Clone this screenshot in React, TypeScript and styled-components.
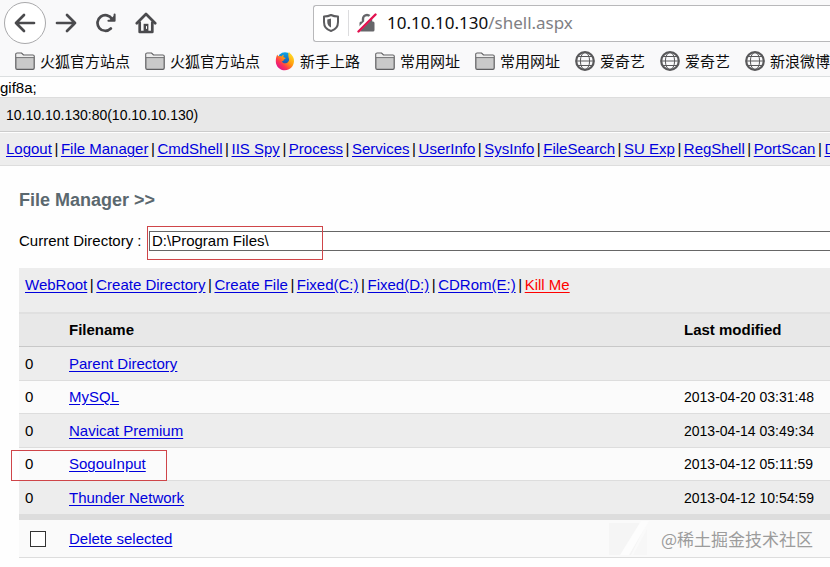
import React, { Fragment, useState } from "react";
import styled, { createGlobalStyle, css } from "styled-components";

const GlobalStyle = createGlobalStyle`
  *, *::before, *::after { box-sizing: border-box; }
  body {
    margin: 0;
    background: #fefefe;
    color: #000;
    font: 15px/20px "Liberation Sans", Arial, "Noto Sans CJK SC", sans-serif;
    overflow-x: hidden;
  }
`;

const Page = styled.div`
  overflow: hidden;
`;

/* ---------- browser chrome ---------- */

const Chrome = styled.header`
  background: #f9f9fa;
  border-bottom: 1px solid #dcdfe0;
`;

const NavBar = styled.div`
  display: flex;
  align-items: center;
  height: 46px;
  padding-left: 4px;
`;

const IconButton = styled.button`
  display: flex;
  align-items: center;
  justify-content: center;
  flex: none;
  width: 40px;
  height: 40px;
  padding: 0;
  border: 0;
  background: none;
  color: #4a4a4d;
`;

const BackButton = styled(IconButton)`
  width: 42px;
  height: 42px;
  border: 1px solid #a9a9ab;
  border-radius: 50%;
  background: #fff;
`;

const UrlBar = styled.div`
  display: flex;
  align-items: center;
  flex: 1;
  height: 37px;
  margin-left: 147px;
  padding-left: 8px;
  border: 1px solid #b8b8ba;
  border-right: 0;
  border-radius: 3px 0 0 3px;
  background: #fff;
`;

const UrlDivider = styled.span`
  width: 1px;
  height: 26px;
  margin: 0 8px;
  background: #dcdcde;
`;

const UrlText = styled.div`
  margin-left: 10px;
  color: #808084;
  font: 17px/24px "Noto Sans", "Open Sans", sans-serif;
  white-space: nowrap;
`;

const UrlHost = styled.span`
  color: #0c0c0d;
`;

const Bookmarks = styled.nav`
  display: flex;
  align-items: center;
  gap: 15px;
  height: 30px;
  padding-left: 15px;
  overflow: hidden;
`;

const Bookmark = styled.a`
  display: flex;
  align-items: center;
  flex: none;
  gap: 5px;
  color: #0c0c0d;
  font: 15px/22px "Noto Sans CJK SC", sans-serif;
  text-decoration: none;
  white-space: nowrap;
`;

/* ---------- page content ---------- */

const Stray = styled.div`
  height: 20px;
  line-height: 22px;
`;

const HostBar = styled.div`
  height: 35px;
  padding: 7px 6px;
  border-top: 1px solid #ddd;
  border-bottom: 1px solid #ccc;
  background: #e8e8e8;
  font-size: 14px;
`;

const LinkRow = styled.nav`
  display: flex;
  white-space: nowrap;
  overflow: hidden;
`;

const Separator = styled.span`
  flex: none;
  width: 9px;
  text-align: center;
`;

const MenuBar = styled(LinkRow)`
  height: 33px;
  margin-top: 1px;
  padding: 6px;
  border-bottom: 1px solid #ddd;
  background: #ededed;
`;

const Link = styled.a<{ $danger?: boolean }>`
  color: ${(p) => (p.$danger ? "#f00" : "#00d")};
  text-decoration: underline;
  text-underline-offset: 2px;
`;

const Main = styled.main`
  padding: 24px 0 0 19px;
`;

const Title = styled.h2`
  margin: 0;
  color: #5b686f;
  font-size: 18px;
  line-height: 20px;
`;

const DirectoryForm = styled.form`
  display: flex;
  align-items: center;
  margin-top: 21px;
`;

const DirectoryLabel = styled.label`
  flex: none;
  width: 130px;
`;

const InputWrap = styled.div`
  position: relative;
  flex: 1;
`;

const DirectoryInput = styled.input`
  display: block;
  width: 100%;
  height: 20px;
  padding: 0 2px;
  border: 1px solid #666;
  border-right: 0;
  border-radius: 0;
  background: #fff;
  color: #000;
  font: inherit;
`;

const Mark = styled.span`
  position: absolute;
  border: 1px solid #cf4549;
  pointer-events: none;
`;

const InputMark = styled(Mark)`
  left: -2px;
  top: -5px;
  width: 176px;
  height: 34px;
`;

const RowMark = styled(Mark)`
  left: -8px;
  top: 2px;
  width: 156px;
  height: 31px;
`;

const Tools = styled(LinkRow)`
  height: 44px;
  margin-top: 17px;
  padding: 7px 6px;
  background: #ededed;
`;

const Table = styled.table`
  width: 100%;
  border-collapse: separate;
  border-spacing: 0;
  table-layout: fixed;
  text-align: left;
`;

const Col = styled.col<{ $width?: number }>`
  ${(p) => p.$width && css`width: ${p.$width}px;`}
`;

const HeadRow = styled.tr`
  height: 35px;
  background: #e8e8e8;
  & > th {
    padding: 0 0 0 6px;
    border-top: 2px solid #e0e0e0;
    border-bottom: 1px solid #c8c8c8;
  }
`;

const Row = styled.tr<{ $shade: boolean }>`
  height: ${(p) => (p.$shade ? 34 : 33)}px;
  background: ${(p) => (p.$shade ? "#ededed" : "#fbfbfb")};
  & > td {
    padding: 0 0 0 6px;
    border-bottom: 1px solid #ddd;
    white-space: nowrap;
  }
  &:last-child {
    height: 33px;
  }
  &:last-child > td {
    border-bottom: 0;
  }
`;

const MarkedCell = styled.td`
  position: relative;
`;

const DateCell = styled.td`
  font-size: 14px;
`;

const FootRow = styled.tr`
  height: 44px;
  background: #fafafa;
  & > td {
    padding: 0 0 0 6px;
    border-top: 6px solid #ddd;
    border-bottom: 1px solid #ddd;
  }
`;

const CheckBox = styled.input`
  appearance: none;
  display: block;
  width: 16px;
  height: 16px;
  margin: 0 0 0 5px;
  border: 1px solid #333;
  background: #fff;
  &:checked {
    background: #333;
    box-shadow: inset 0 0 0 3px #fff;
  }
`;

const WatermarkCell = styled.td`
  position: relative;
`;

const Watermark = styled.div`
  position: absolute;
  right: 17px;
  top: 0;
  display: flex;
  align-items: center;
  gap: 8px;
  height: 38px;
  color: #9c9c9c;
  font: 17px/24px "Noto Sans CJK SC", sans-serif;
  white-space: nowrap;
  pointer-events: none;
`;

/* ---------- icons ---------- */

const stroke = {
  fill: "none",
  stroke: "currentColor",
  strokeWidth: 2.7,
  strokeLinecap: "round" as const,
  strokeLinejoin: "round" as const,
};

const BackIcon = () => (
  <svg width="22" height="20" viewBox="0 0 22 20" {...stroke}>
    <path d="M20 10H2M10 2L2 10l8 8" />
  </svg>
);

const ForwardIcon = () => (
  <svg width="22" height="20" viewBox="0 0 22 20" {...stroke}>
    <path d="M2 10h18M12 2l8 8-8 8" />
  </svg>
);

const ReloadIcon = () => (
  <svg width="20" height="20" viewBox="0 0 20 20" {...stroke}>
    <path d="M14.800 15.500A7.800 7.800 0 1 1 16 6" />
    <path d="M18.600 1.500v6.200h-6.200" strokeWidth="2" />
    <path d="M18.600 2v5.700h-5.700z" fill="currentColor" stroke="none" />
  </svg>
);

const HomeIcon = () => (
  <svg width="22" height="22" viewBox="0 0 22 22" {...stroke}>
    <path d="M1.800 11.300L11 2l9.200 9.300" />
    <path d="M4.700 10.500V20h12.600v-9.500" />
    <path d="M8.600 20v-8.200h4.800V20z" fill="currentColor" stroke="none" />
    <path d="M11.500 14.500v2" stroke="#fff" strokeWidth="1" />
  </svg>
);

const ShieldIcon = () => (
  <svg width="18" height="20" viewBox="0 0 18 20">
    <path
      d="M9 2C11.200 3.200 13.500 3.600 16 3.600V9c0 4.500-2.500 7.700-7 9-4.500-1.300-7-4.500-7-9V3.600C4.500 3.600 6.800 3.200 9 2z"
      fill="none"
      stroke="#5c5c5f"
      strokeWidth="2"
      strokeLinejoin="round"
    />
    <path d="M9 5.500v9C6.500 13.300 5.300 11.500 5.300 9V6.400C6.800 6.300 8 6 9 5.500z" fill="#5c5c5f" />
  </svg>
);

const LockIcon = () => (
  <svg width="20" height="20" viewBox="0 0 20 20">
    <path d="M6 9V6a4 4 0 0 1 8 0v3" fill="none" stroke="#66666a" strokeWidth="2.400" />
    <rect x="2.500" y="8.500" width="15" height="10" rx="1.500" fill="#66666a" />
    <path d="M0.500 17.800L17.800 0.500" stroke="#fff" strokeWidth="4" />
    <path d="M1.500 18.500L18.500 1.500" stroke="#e2114f" strokeWidth="2.400" strokeLinecap="round" />
  </svg>
);

const FolderIcon = () => (
  <svg width="20" height="20" viewBox="0 0 20 20">
    <path
      d="M0.800 17V3.300A1.300 1.300 0 0 1 2.100 2H6.500l2 2h9.400a1.300 1.300 0 0 1 1.300 1.300V17a1.300 1.300 0 0 1-1.300 1.300H2.100A1.300 1.300 0 0 1 0.800 17z"
      fill="#c9c9c9"
      stroke="#5e5e60"
      strokeWidth="1.200"
    />
    <path d="M1.400 2.700h4.800l2 2h10.300v1.500H1.400z" fill="#ededed" />
    <path d="M1 6.600h18" stroke="#737375" strokeWidth="1" />
  </svg>
);

const GlobeIcon = () => (
  <svg width="20" height="20" viewBox="0 0 20 20" fill="none" stroke="#58585a">
    <circle cx="10" cy="10" r="8.800" strokeWidth="2.200" />
    <g strokeWidth="1">
      <ellipse cx="10" cy="10" rx="4.600" ry="8.500" />
      <path d="M3 5.500h14M1 10h18M3 14.500h14" />
    </g>
  </svg>
);

const FirefoxIcon = () => (
  <svg width="20" height="20" viewBox="0 0 20 20">
    <defs>
      <linearGradient id="flame" x1="0.900" y1="0.100" x2="0.200" y2="0.900">
        <stop offset="0" stopColor="#ffe226" />
        <stop offset="0.450" stopColor="#ff980e" />
        <stop offset="0.750" stopColor="#ff3750" />
        <stop offset="1" stopColor="#e31587" />
      </linearGradient>
      <linearGradient id="globe" x1="0.500" y1="0" x2="0.500" y2="1">
        <stop offset="0" stopColor="#0aa5e8" />
        <stop offset="1" stopColor="#273a94" />
      </linearGradient>
    </defs>
    <circle cx="10" cy="8.800" r="7.600" fill="url(#globe)" />
    <path
      d="M2.300 3.500C2.500 4.300 3 5 3.600 5.400 4.400 5 5.600 5 6.500 5.400 7.100 4.400 8 3.800 9 3.700 8.300 4.500 8.300 5.500 8.600 6.300L10.600 7c-.2 1-1.700 1.300-2.100 2 .2 1.200-.8 1.300-1.800 1 .7 1.900 2.500 2.700 4.300 2.200 2.600-.6 3.700-3 2.700-5.200C13.200 4.700 13 2.400 14 .8c.6 1.500 1.600 1.800 2.700 3.200C18.400 6 19.200 8 19 10.600 18.600 15.700 14.800 19.300 10 19.300 4.800 19.300.8 15.400.8 10.200.8 7.600 1.300 5.300 2.300 3.500z"
      fill="url(#flame)"
    />
  </svg>
);

const WatermarkLogo = () => (
  <svg width="44" height="36" viewBox="0 0 44 36">
    <path d="M0 2h38L22 34H0z" fill="#f5f5f5" />
    <path d="M40 0L20 34h-9L32 0z" fill="#fdfdfd" />
    <path d="M38 8v26H24z" fill="#f7f7f7" />
  </svg>
);

/* ---------- data ---------- */

const icons = { folder: FolderIcon, firefox: FirefoxIcon, globe: GlobeIcon };

const bookmarks: { icon: keyof typeof icons; label: string }[] = [
  { icon: "folder", label: "火狐官方站点" },
  { icon: "folder", label: "火狐官方站点" },
  { icon: "firefox", label: "新手上路" },
  { icon: "folder", label: "常用网址" },
  { icon: "folder", label: "常用网址" },
  { icon: "globe", label: "爱奇艺" },
  { icon: "globe", label: "爱奇艺" },
  { icon: "globe", label: "新浪微博" },
];

const menu = [
  "Logout", "File Manager", "CmdShell", "IIS Spy", "Process", "Services",
  "UserInfo", "SysInfo", "FileSearch", "SU Exp", "RegShell", "PortScan", "DataBase",
];

const tools = [
  "WebRoot", "Create Directory", "Create File", "Fixed(C:)", "Fixed(D:)", "CDRom(E:)", "Kill Me",
];

const files = [
  { name: "Parent Directory", modified: "" },
  { name: "MySQL", modified: "2013-04-20 03:31:48" },
  { name: "Navicat Premium", modified: "2013-04-14 03:49:34" },
  { name: "SogouInput", modified: "2013-04-12 05:11:59", marked: true },
  { name: "Thunder Network", modified: "2013-04-12 10:54:59" },
];

const Links = ({ items }: { items: string[] }) => (
  <>
    {items.map((item, i) => (
      <Fragment key={item}>
        {i > 0 && <Separator>|</Separator>}
        <Link href="#" $danger={item === "Kill Me"}>{item}</Link>
      </Fragment>
    ))}
  </>
);

export default function App() {
  const [directory, setDirectory] = useState("D:\\Program Files\\");

  return (
    <Page>
      <GlobalStyle />
      <Chrome>
        <NavBar>
          <BackButton aria-label="Back"><BackIcon /></BackButton>
          <IconButton aria-label="Forward"><ForwardIcon /></IconButton>
          <IconButton aria-label="Reload"><ReloadIcon /></IconButton>
          <IconButton aria-label="Home"><HomeIcon /></IconButton>
          <UrlBar>
            <ShieldIcon />
            <UrlDivider />
            <LockIcon />
            <UrlText><UrlHost>10.10.10.130</UrlHost>/shell.aspx</UrlText>
          </UrlBar>
        </NavBar>
        <Bookmarks>
          {bookmarks.map(({ icon, label }, i) => {
            const Icon = icons[icon];
            return (
              <Bookmark href="#" key={i}>
                <Icon />
                {label}
              </Bookmark>
            );
          })}
        </Bookmarks>
      </Chrome>

      <Stray>gif8a;</Stray>
      <HostBar>10.10.10.130:80(10.10.10.130)</HostBar>
      <MenuBar><Links items={menu} /></MenuBar>

      <Main>
        <Title>File Manager &gt;&gt;</Title>
        <DirectoryForm onSubmit={(e) => e.preventDefault()}>
          <DirectoryLabel htmlFor="directory">Current Directory :</DirectoryLabel>
          <InputWrap>
            <DirectoryInput
              id="directory"
              type="text"
              value={directory}
              onChange={(e) => setDirectory(e.target.value)}
            />
            <InputMark />
          </InputWrap>
        </DirectoryForm>

        <Tools><Links items={tools} /></Tools>
        <Table>
          <colgroup>
            <Col $width={44} />
            <Col />
            <Col $width={152} />
          </colgroup>
          <thead>
            <HeadRow>
              <th />
              <th>Filename</th>
              <th>Last modified</th>
            </HeadRow>
          </thead>
          <tbody>
            {files.map((file, i) => (
              <Row key={file.name} $shade={i % 2 === 0}>
                <MarkedCell>
                  0
                  {file.marked && <RowMark />}
                </MarkedCell>
                <td><Link href="#">{file.name}</Link></td>
                <DateCell>{file.modified}</DateCell>
              </Row>
            ))}
          </tbody>
          <tfoot>
            <FootRow>
              <td><CheckBox type="checkbox" aria-label="Select all" /></td>
              <td><Link href="#">Delete selected</Link></td>
              <WatermarkCell>
                <Watermark>
                  <WatermarkLogo />
                  @稀土掘金技术社区
                </Watermark>
              </WatermarkCell>
            </FootRow>
          </tfoot>
        </Table>
      </Main>
    </Page>
  );
}
